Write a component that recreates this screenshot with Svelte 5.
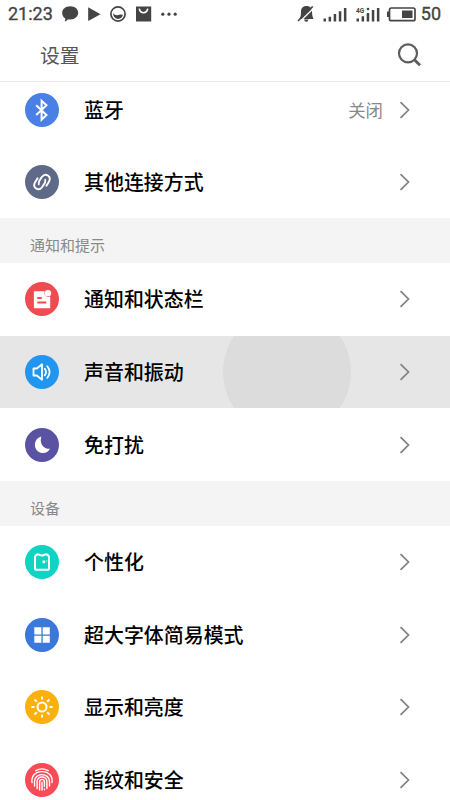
<script>
    const groups = [
        {
            title: '',
            items: [
                { icon: 'bluetooth', label: '蓝牙', value: '关闭' },
                { icon: 'link', label: '其他连接方式' }
            ]
        },
        {
            title: '通知和提示',
            items: [
                { icon: 'notice', label: '通知和状态栏' },
                { icon: 'sound', label: '声音和振动' },
                { icon: 'moon', label: '免打扰' }
            ]
        },
        {
            title: '设备',
            items: [
                { icon: 'theme', label: '个性化' },
                { icon: 'grid', label: '超大字体简易模式' },
                { icon: 'sun', label: '显示和亮度' },
                { icon: 'finger', label: '指纹和安全' }
            ]
        }
    ];

    const rays = [0, 45, 90, 135, 180, 225, 270, 315];

    let pressed = 'sound';
</script>

<div class="screen">
    <header>
        <div class="status-bar">
            <span class="clock">21:23</span>
            <svg class="left-icons" width="116" height="18" viewBox="0 0 116 18">
                <path fill="#444" d="M8.200 1.200c4.600 0 8 2.800 8 6.500s-3.400 6.700-8 6.700c-.8 0-1.500-.1-2.200-.2-.8 1.200-2 2-3.400 2.100.6-.8.8-1.800.7-2.800C1.400 12.400.2 10.400.2 7.900c0-3.900 3.400-6.700 8-6.700z" />
                <path fill="#444" d="M26.200 2.200 38.500 9.200 26.200 16z" />
                <circle cx="56" cy="9" r="7.100" fill="none" stroke="#444" stroke-width="1.700" />
                <path fill="#444" d="M51 8.300q2 2.200 4.500 1.900 2.800-1.400 5.400-.4-.8 4.100-4.900 4.100-4.500-.2-5-5.600z" />
                <path fill="#444" d="M74 1.500h15.200v15H74z" />
                <path fill="none" stroke="#fff" stroke-width="1.600" d="M77.300 3.700q.6 4 4.200 4t4.200-4" />
                <g fill="#444">
                    <circle cx="100.800" cy="9.200" r="1.600" />
                    <circle cx="107" cy="9.200" r="1.600" />
                    <circle cx="113.200" cy="9.200" r="1.600" />
                </g>
            </svg>
            <svg class="right-icons" width="122" height="20" viewBox="0 0 122 20">
                <g fill="#444">
                    <path d="M9.500 2c4 0 5.500 2.500 5.500 5.500 0 3.500.5 5.200 1.500 7.500h-14C3.500 13 4 11.500 4 7.500 4 4.500 5.500 2 9.500 2z" />
                    <path d="M7 15.500h4.500q-.5 2.300-2.200 2.300T7 15.500z" />
                </g>
                <path stroke="#fff" stroke-width="1.300" d="M2.500 18 16.800 4" />
                <path stroke="#444" stroke-width="1.700" d="M1 17 15.700 2.500" />
                <g fill="#444">
                    <path d="M26.500 14.500H29V17.500h-2.500zM31.600 12.700h2.500v4.800h-2.500zM36.700 10h2.500v7.500h-2.500zM41.800 7.200h2.500v10.300h-2.500zM46.900 4h2.500v13.500h-2.500z" />
                    <path d="M59.500 14.500H62v3h-2.500zM64.600 12.200h2.500v5.300h-2.500zM69.700 9h2.500v8.500h-2.500zM74.800 6h2.500v11.500h-2.500zM79.900 4h2.500v13.500h-2.500z" />
                    <path d="M90 7.500h3v5.500h-3z" />
                    <path d="M105 6.500h10.500v7.500H105z" />
                    <circle cx="71" cy="5" r="1.300" />
                </g>
                <text x="59" y="9">4G</text>
                <rect x="92.500" y="4" width="25.500" height="12.700" rx="1.800" fill="none" stroke="#444" stroke-width="1.700" />
            </svg>
            <span class="battery">50</span>
        </div>
        <div class="toolbar">
            <h1>设置</h1>
            <svg width="26" height="26" viewBox="0 0 26 26" fill="none" stroke="#5c5c5c">
                <circle cx="11" cy="11.300" r="9" stroke-width="2.200" />
                <path stroke-width="2.800" d="m17.400 17.700 5.600 5.600" />
            </svg>
        </div>
    </header>

    <main>
        <div class="list">
            {#each groups as group}
                {#if group.title}
                    <h2>{group.title}</h2>
                {/if}
                {#each group.items as item}
                    <div class="row" class:pressed={item.icon === pressed}>
                        <div class="icon {item.icon}">
                            <svg width="34" height="34" viewBox="0 0 34 34" fill="none" stroke="#fff" stroke-width="1.800">
                                {#if item.icon === 'bluetooth'}
                                    <path stroke-width="2" d="M11.200 12.300 21.500 21.900 16.600 26.600V7.800l4.900 4.500-10.300 9.600" />
                                {:else if item.icon === 'link'}
                                    <path stroke-linecap="round" stroke-width="1.900" d="m12.600 13.300-2.400 3.800c-3.300 5.600 3.400 9.900 7 4.900l2.400-3.700c.7-1.200.9-2.300.6-3.600" />
                                    <path stroke-linecap="round" stroke-width="1.900" d="m21.400 20.700 2.400-3.800c3.300-5.600-3.400-9.900-7-4.900l-2.400 3.700c-.7 1.200-.9 2.300-.6 3.600" />
                                {:else if item.icon === 'notice'}
                                    <path fill="#fff" stroke="none" d="M9.300 9.200h10.400a4 4 0 0 0 5.500 5.200v11q0 .9-.9.900H9.800q-.9 0-.9-.9V10q0-.8.400-.8z" />
                                    <circle cx="22.900" cy="11.300" r="3.200" fill="#fff" stroke="none" />
                                    <path stroke="#f04b50" stroke-width="2" d="M12.300 16.100h4.400M12.300 20.600h9" />
                                {:else if item.icon === 'sound'}
                                    <path stroke-linejoin="round" d="M8.500 13.500h3.300L17 9.300v15.400l-5.200-4.200H8.500z" />
                                    <path stroke-linecap="round" d="M19.800 13.700q2.400 3.300 0 6.600M22.300 11.200q4.600 5.800 0 11.600" />
                                {:else if item.icon === 'moon'}
                                    <path fill="#fff" stroke="none" d="M16.300 8.400c-2 6.800 1.800 12.500 8.700 12.400-1.600 3-4.500 4.500-7.600 4.200-4.400-.3-7.500-3.500-7.500-7.900 0-4.300 2.600-7.700 6.400-8.700z" />
                                {:else if item.icon === 'theme'}
                                    <path stroke-linejoin="round" stroke-width="2" d="M10 11.500l1.900-2h2q3.100 2 6.200 0h2L24 11.500v11.700q0 1.600-1.600 1.600H11.600q-1.600 0-1.600-1.600z" />
                                    <path fill="#fff" stroke="none" d="M17.500 15.500h2.700v2.700h-2.700zM21.300 15.500h1v1h-1z" />
                                {:else if item.icon === 'grid'}
                                    <path fill="#fff" stroke="none" d="M9.300 9.300h7.100v7.100H9.300zM17.700 9.300h7.100v7.100h-7.100zM9.300 17.700h7.100v7.100H9.300zM17.700 17.700h7.100v7.100h-7.100z" />
                                {:else if item.icon === 'sun'}
                                    <circle cx="17" cy="17" r="4.500" stroke-width="2" />
                                    {#each rays as angle}
                                        <path transform="rotate({angle} 17 17)" d="M17 6.400v3.200" stroke-width="2" />
                                    {/each}
                                {:else}
                                    <g stroke-width="1.400" stroke-linecap="round">
                                        <path d="M10.800 7.700q6.200-3.600 12.400 0" />
                                        <path d="M7 19.500c-.8-6 2.800-10.900 10-10.900S27.800 13.500 27 19.500" />
                                        <path d="M9.500 23v-4.600c0-9 15-9 15 0V23" />
                                        <path d="M12.100 25.500v-7c0-6 9.800-6 9.800 0v7" />
                                        <path d="M14.600 27v-8.200c0-3.200 4.800-3.200 4.800 0v4.600M17 19.200V27M19.400 26v.800" />
                                    </g>
                                {/if}
                            </svg>
                        </div>
                        <span class="label">{item.label}</span>
                        {#if item.value}
                            <span class="value">{item.value}</span>
                        {/if}
                        <svg class="arrow" width="12" height="18" viewBox="0 0 12 18">
                            <path d="m1.500 1.200 8 7.800-8 7.800" />
                        </svg>
                    </div>
                {/each}
            {/each}
        </div>
    </main>
</div>

<style>
    :global(body) {
        margin: 0;
        background: #fff;
    }

    .screen {
        width: 450px;
        height: 800px;
        display: flex;
        flex-direction: column;
        overflow: hidden;
        background: #fff;
        font-family: "Noto Sans CJK SC", sans-serif;
    }

    header {
        flex: none;
        height: 81px;
        border-bottom: 1px solid #e6e6e6;
    }

    .status-bar {
        display: flex;
        align-items: center;
        height: 28px;
        padding: 0 9px 0 8px;
        color: #444;
        font: 400 18px/28px Roboto, sans-serif;
        -webkit-text-stroke: 0.35px #444;
    }

    .clock {
        width: 45px;
    }

    .left-icons {
        margin-left: 9px;
    }

    .right-icons {
        margin-left: auto;
        margin-right: 2px;
    }

    .right-icons text {
        font: 700 6.500px Roboto, sans-serif;
        fill: #444;
        -webkit-text-stroke: 0;
    }

    .toolbar {
        display: flex;
        align-items: center;
        justify-content: space-between;
        height: 53px;
        padding: 0 27px 0 40px;
    }

    h1 {
        margin: 0;
        font-size: 19.800px;
        font-weight: 400;
        color: #555;
    }

    main {
        flex: 1;
        min-height: 0;
        overflow: hidden;
    }

    /* list is scrolled a little under the header */
    .list {
        margin-top: -8.800px;
    }

    h2 {
        box-sizing: border-box;
        height: 44.800px;
        margin: 0;
        padding: 8px 30px 0;
        background: #f4f4f4;
        color: #888;
        font-size: 15px;
        font-weight: 400;
        line-height: 37px;
    }

    .row {
        position: relative;
        box-sizing: border-box;
        display: flex;
        align-items: center;
        height: 72.600px;
        padding: 0 39px 0 25px;
        overflow: hidden;
    }

    .pressed {
        background: #e6e6e6;
    }

    /* touch ripple */
    .pressed::before {
        content: '';
        position: absolute;
        left: 223px;
        top: -28px;
        width: 128px;
        height: 128px;
        border-radius: 50%;
        background: #dcdcdc;
    }

    .icon {
        width: 34px;
        height: 34px;
        border-radius: 50%;
    }

    .icon svg {
        display: block;
    }

    .bluetooth { background: #4a7fe6; }
    .link { background: #5f6a88; }
    .notice { background: #f04b50; }
    .sound { background: #2196f0; }
    .moon { background: #5a52a2; }
    .theme { background: #0fd3c3; }
    .grid { background: #3a78dc; }
    .sun { background: #fbb00c; }
    .finger { background: #f84b55; }

    .label {
        flex: 1;
        margin-left: 25px;
        padding-bottom: 1px;
        font-size: 19.950px;
        font-weight: 500;
        color: #000;
    }

    .value {
        margin-right: 16px;
        padding-bottom: 1px;
        font-size: 17.400px;
        color: #888;
    }

    .arrow {
        fill: none;
        stroke: #808080;
        stroke-width: 1.700;
    }
</style>
